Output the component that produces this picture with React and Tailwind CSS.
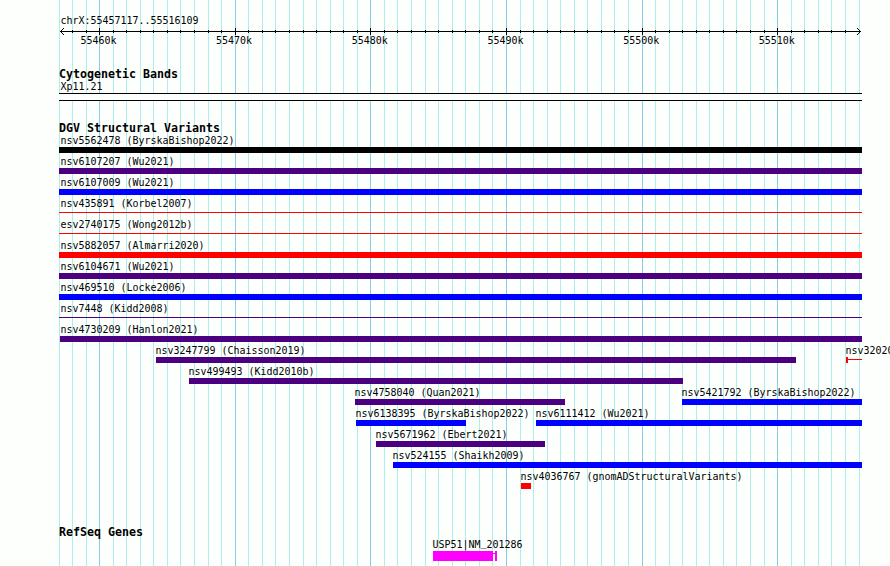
import React from 'react';

const GRID = [
  59, 72, 86, 99, 113, 126, 140, 153, 167, 180, 194, 208, 221, 235, 248, 262, 275, 289, 303, 316, 330, 343, 357, 370,
  384, 397, 411, 425, 438, 452, 465, 479, 492, 506, 520, 533, 547, 560, 574, 587, 601, 614, 628, 642, 655, 669, 682,
  696, 709, 723, 736, 750, 764, 777, 791, 804, 818, 831, 845, 859,
];
const MAJOR = [99, 235, 370, 506, 642, 777];
const TICK_LABELS = ['55460k', '55470k', '55480k', '55490k', '55500k', '55510k'];

const BLACK = 'bg-black';
const INDIGO = 'bg-[#4b0082]';
const BLUE = 'bg-[#0000ff]';
const RED = 'bg-[#ff0000]';

// Each row lists its features from left to right; x and end are page pixels.
const ROWS = [
  [{ label: 'nsv5562478 (ByrskaBishop2022)', x: 59, end: 862, color: BLACK }],
  [{ label: 'nsv6107207 (Wu2021)', x: 59, end: 862, color: INDIGO }],
  [{ label: 'nsv6107009 (Wu2021)', x: 59, end: 862, color: BLUE }],
  [{ label: 'nsv435891 (Korbel2007)', x: 59, end: 862, color: RED, thin: true }],
  [{ label: 'esv2740175 (Wong2012b)', x: 59, end: 862, color: RED, thin: true }],
  [{ label: 'nsv5882057 (Almarri2020)', x: 59, end: 862, color: RED }],
  [{ label: 'nsv6104671 (Wu2021)', x: 59, end: 862, color: INDIGO }],
  [{ label: 'nsv469510 (Locke2006)', x: 59, end: 862, color: BLUE }],
  [{ label: 'nsv7448 (Kidd2008)', x: 59, end: 862, color: INDIGO, thin: true }],
  [{ label: 'nsv4730209 (Hanlon2021)', x: 60, end: 862, color: INDIGO, shift: 0.4 }],
  [
    { label: 'nsv3247799 (Chaisson2019)', x: 156, end: 796, color: INDIGO, shift: -0.6 },
    { label: 'nsv32020', x: 846, end: 862, color: RED, shift: -0.6, thin: true, cap: true },
  ],
  [{ label: 'nsv499493 (Kidd2010b)', x: 189, end: 683, color: INDIGO, shift: -0.6 }],
  [
    { label: 'nsv4758040 (Quan2021)', x: 355, end: 565, color: INDIGO, shift: -0.6 },
    { label: 'nsv5421792 (ByrskaBishop2022)', x: 682, end: 862, color: BLUE, shift: -0.6 },
  ],
  [
    { label: 'nsv6138395 (ByrskaBishop2022)', x: 356, end: 466, color: BLUE, shift: -0.6 },
    { label: 'nsv6111412 (Wu2021)', x: 536, end: 862, color: BLUE, shift: -0.6 },
  ],
  [{ label: 'nsv5671962 (Ebert2021)', x: 376, end: 545, color: INDIGO, shift: -0.6 }],
  [{ label: 'nsv524155 (Shaikh2009)', x: 393, end: 862, color: BLUE, shift: -0.6 }],
  [{ label: 'nsv4036767 (gnomADStructuralVariants)', x: 521, end: 531, color: RED, shift: -0.6 }],
];

function GridLines() {
  return (
    <svg className="absolute inset-0" width="890" height="566" shapeRendering="crispEdges">
      {GRID.map((x) => (
        <rect key={x} x={x} y="0" width="1" height="566" fill={MAJOR.includes(x) ? '#87ceeb' : '#afeeee'} />
      ))}
    </svg>
  );
}

function Ruler() {
  return (
    <svg className="block" width="890" height="9" shapeRendering="crispEdges">
      <rect x="60" y="4" width="801" height="1" />
      {GRID.slice(1, -1).map((x) =>
        MAJOR.includes(x) ? (
          <rect key={x} x={x} y="1" width="1" height="7" />
        ) : (
          <rect key={x} x={x} y="3" width="1" height="3" />
        ),
      )}
      <path d="M61 3h1v1h-1zM62 2h1v1h-1zM63 1h1v1h-1zM61 5h1v1h-1zM62 6h1v1h-1zM63 7h1v1h-1z" />
      <path d="M859 3h1v1h-1zM858 2h1v1h-1zM857 1h1v1h-1zM859 5h1v1h-1zM858 6h1v1h-1zM857 7h1v1h-1z" />
    </svg>
  );
}

function Heading({ children }) {
  return (
    <h2 className="h-[13px] pl-[59px] text-[11.63px] leading-[13px] font-bold whitespace-pre">{children}</h2>
  );
}

function Feature({ label, x, end, color, thin, cap, shift = 1.4, from }) {
  return (
    <div className="shrink-0" style={{ marginLeft: x - from, width: end - x }}>
      <div className="h-[13px] w-0 whitespace-pre" style={{ textIndent: shift }}>
        {label}
      </div>
      <div className="flex h-1.5 items-start">
        {cap && <div className={`h-1.5 w-0.5 ${color}`} />}
        <div className={`grow ${thin ? 'mt-0.5 h-px' : 'h-1.5'} ${color}`} />
      </div>
    </div>
  );
}

export default function App() {
  return (
    <div className="relative h-[566px] w-[890px] overflow-hidden bg-[#fdfffc] font-['DejaVu_Sans_Mono',monospace] text-[9.97px] leading-[13px] text-black">
      <GridLines />
      <main className="relative pt-[14px]">
        <div className="h-[13px] pl-[60.4px]">chrX:55457117..55516109</div>
        <Ruler />
        <div className="-mt-[2px] flex h-[13px] gap-[99.7px] pl-[80.4px]">
          {TICK_LABELS.map((t) => (
            <span key={t} className="w-9">{t}</span>
          ))}
        </div>

        <section className="mt-[21px]">
          <Heading>Cytogenetic Bands</Heading>
          <div className="h-[12px] pl-[60.4px] leading-[12px]">Xp11.21</div>
          <div className="ml-[59px] h-2 w-[803px] border-y border-black bg-[#fdfffc]" />
        </section>

        <section className="mt-[21px]">
          <Heading>DGV Structural Variants</Heading>
          <div className="-mt-px flex flex-col gap-0.5">
            {ROWS.map((row) => (
              <div key={row[0].label} className="flex h-[19px]">
                {row.map((f, i) => (
                  <Feature key={f.label} {...f} from={i ? row[i - 1].end : 0} />
                ))}
              </div>
            ))}
          </div>
        </section>

        <section className="mt-[37px]">
          <Heading>RefSeq Genes</Heading>
          <div className="-mt-px h-[13px] pl-[432.4px]">
            USP51|NM<span className="relative -top-0.5">_</span>201286
          </div>
          <div className="ml-[433px] flex h-2.5">
            <div className="w-[60px] bg-[#ff00ff]" />
            <div className="mt-0.5 h-px w-0.5 bg-[#ff00ff]" />
            <div className="w-0.5 bg-[#ff00ff]" />
          </div>
        </section>
      </main>
    </div>
  );
}
